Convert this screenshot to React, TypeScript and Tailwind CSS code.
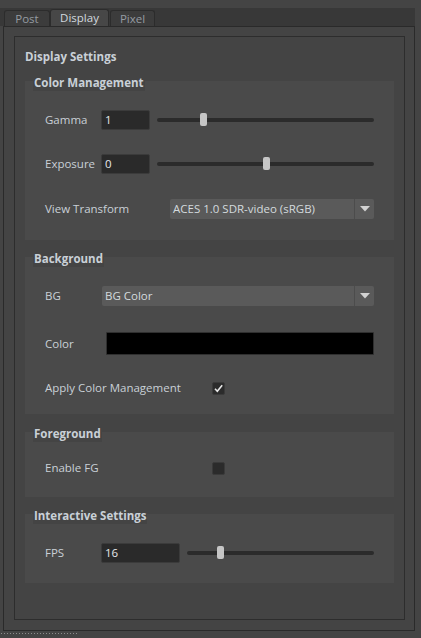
import type { ReactNode } from 'react'

const label = 'text-[11.5px] leading-[16px] text-[#c9d0d7]'

function Slider({ pct }: { pct: number }) {
  return (
    <div className="relative flex h-[20px] flex-1 items-center">
      <div className="h-[4px] w-full rounded-full bg-[#2b2b2b]" />
      <div
        className="absolute top-[3px] h-[13px] w-[7px] rounded-[2px] bg-[#c6c6c6]"
        style={{ left: `calc((100% - 7px) * ${pct})` }}
      />
    </div>
  )
}

function NumInput({ value, w }: { value: string; w: string }) {
  return (
    <div className={`flex h-[20px] items-center rounded-[2px] border border-[#3b3b3b] bg-[#2a2a2a] pl-[3px] text-[11.5px] font-medium text-[#e6e8ea] ${w}`}>
      {value}
    </div>
  )
}

function Combo({ text }: { text: string }) {
  return (
    <div className="flex h-[20px] flex-1 items-stretch rounded-[2px] bg-[#5a5a5a]">
      <div className="flex flex-1 items-center pl-[3px] text-[11.5px] font-medium text-[#d4dade]">{text}</div>
      <div className="w-px bg-[#4c4c4c]" />
      <div className="flex w-[19px] items-center justify-center">
        <svg width="10" height="6" viewBox="0 0 10 6">
          <path d="M0 0h10L5 5.5z" fill="#d2d2d2" />
        </svg>
      </div>
    </div>
  )
}

function Check({ checked }: { checked?: boolean }) {
  return (
    <div className="flex h-[13px] w-[13px] items-center justify-center rounded-[2px] border border-[#3a3a3a] bg-[#2b2b2b]">
      {checked && (
        <svg width="11" height="11" viewBox="0 0 11 11">
          <path d="M2 5.8 4.3 8.2 9.2 2.2" fill="none" stroke="#e8e8e8" strokeWidth="1.6" />
        </svg>
      )}
    </div>
  )
}

function Section({ title, className, outer = '', children }: { title: string; className: string; outer?: string; children: ReactNode }) {
  return (
    <div className={`flex flex-col ${outer}`}>
      <div className={`relative z-10 -mb-[10px] ml-[8px] self-start bg-[#444444] px-px font-bold ${label}`}>{title}</div>
      <div className={`flex flex-col bg-[#4a4a4a] pl-[20px] pr-[20px] ${className}`}>{children}</div>
    </div>
  )
}

function Row({ children, className = '' }: { children: ReactNode; className?: string }) {
  return <div className={`flex h-[20px] items-center ${className}`}>{children}</div>
}

export default function App() {
  return (
    <div className="flex h-[638px] w-[421px] flex-col bg-[#444444] font-['Open_Sans',sans-serif] font-medium">
      <div className="h-[8px]" />
      {/* tab strip */}
      <div className="flex h-[18px] w-[415px] items-end bg-[#383838] pl-[4px]">
        <div className="flex h-[16px] w-[46px] items-center justify-center rounded-t-[3px] border border-b-0 border-[#2c2c2c] bg-[#3c3c3c] text-[11.5px] text-[#959ba2]">
          Post
        </div>
        <div className="flex h-[17px] w-[59px] items-center justify-center rounded-t-[3px] border border-b-0 border-[#2c2c2c] bg-[#474747] text-[11.5px] text-[#d2d9df]">
          Display
        </div>
        <div className="ml-[1px] flex h-[16px] w-[45px] items-center justify-center rounded-t-[3px] border border-b-0 border-[#2c2c2c] bg-[#3c3c3c] text-[11.5px] text-[#959ba2]">
          Pixel
        </div>
      </div>

      {/* outer frame */}
      <div className="ml-[3px] flex h-[605px] w-[412px] flex-col border border-[#2a2a2a] pl-[10px] pt-[9px]">
        <div className="flex h-[584px] w-[391px] flex-col border border-[#2d2d2d] px-[10px] pt-[12px]">
          <div className={`font-bold ${label}`}>Display Settings</div>

          <Section title="Color Management" outer="mt-[10px]" className="pb-[21px] pt-[29px]">
            <Row>
              <div className={`w-[56px] ${label}`}>Gamma</div>
              <NumInput value="1" w="w-[49px]" />
              <div className="w-[7px]" />
              <Slider pct={0.206} />
            </Row>
            <Row className="mt-[24px]">
              <div className={`w-[56px] ${label}`}>Exposure</div>
              <NumInput value="0" w="w-[49px]" />
              <div className="w-[7px]" />
              <Slider pct={0.507} />
            </Row>
            <Row className="mt-[25px]">
              <div className={`w-[125px] ${label}`}>View Transform</div>
              <Combo text="ACES 1.0 SDR-video (sRGB)" />
            </Row>
          </Section>

          <Section title="Background" outer="mt-[11px]" className="pb-[16px] pt-[29px]">
            <Row>
              <div className={`w-[57px] ${label}`}>BG</div>
              <Combo text="BG Color" />
            </Row>
            <div className="mt-[26px] flex h-[23px] items-center">
              <div className={`w-[61px] ${label}`}>Color</div>
              <div className="h-[23px] flex-1 rounded-[1px] border border-[#2f2f2f] bg-black" />
            </div>
            <Row className="mt-[23px]">
              <div className={`w-[167px] ${label}`}>Apply Color Management</div>
              <Check checked />
            </Row>
          </Section>

          <Section title="Foreground" outer="mt-[12px]" className="pb-[19px] pt-[26px]">
            <Row>
              <div className={`w-[167px] ${label}`}>Enable FG</div>
              <Check />
            </Row>
          </Section>

          <Section title="Interactive Settings" outer="mt-[11px]" className="pb-[20px] pt-[29px]">
            <Row>
              <div className={`w-[56px] ${label}`}>FPS</div>
              <NumInput value="16" w="w-[79px]" />
              <div className="w-[7px]" />
              <Slider pct={0.168} />
            </Row>
          </Section>
        </div>
      </div>

      <div className="mt-[2px] ml-[1px] h-px w-[78px] bg-[linear-gradient(to_right,#8c8c8c_1px,transparent_1px)] bg-[length:3px_1px]" />
    </div>
  )
}
